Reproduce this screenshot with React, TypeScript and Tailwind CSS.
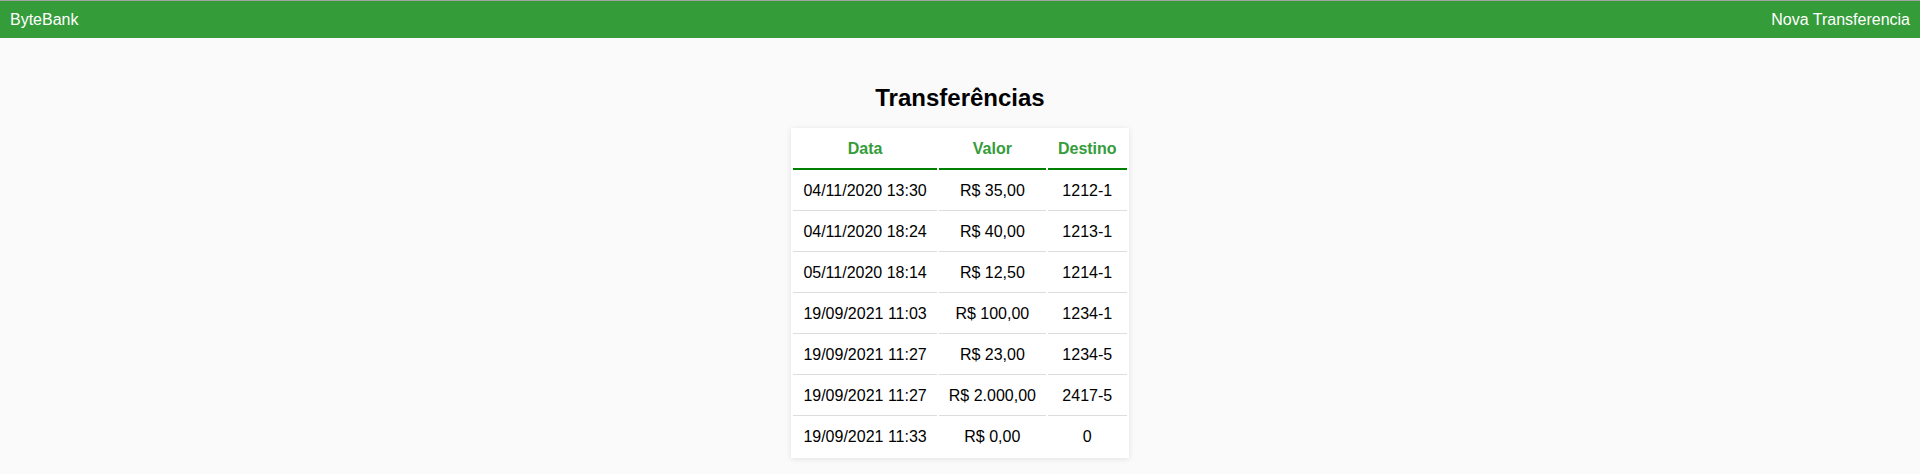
const TRANSFERS = [
  { data: '04/11/2020 13:30', valor: 'R$ 35,00', destino: '1212-1' },
  { data: '04/11/2020 18:24', valor: 'R$ 40,00', destino: '1213-1' },
  { data: '05/11/2020 18:14', valor: 'R$ 12,50', destino: '1214-1' },
  { data: '19/09/2021 11:03', valor: 'R$ 100,00', destino: '1234-1' },
  { data: '19/09/2021 11:27', valor: 'R$ 23,00', destino: '1234-5' },
  { data: '19/09/2021 11:27', valor: 'R$ 2.000,00', destino: '2417-5' },
  { data: '19/09/2021 11:33', valor: 'R$ 0,00', destino: '0' },
]

function Navbar() {
  return (
    <header className="flex h-[38px] items-center justify-between border-t border-[#a3a3a3] bg-[#359c3a] px-[10px] text-[16px] text-white">
      <span>ByteBank</span>
      <span>Nova Transferencia</span>
    </header>
  )
}

export default function App() {
  const th = 'border-b-2 border-[#008000] px-[10px] py-[10px] text-center font-bold leading-[18px] text-[#359c3a]'

  return (
    <div className="min-h-[474px] bg-[#fafafa] font-['Liberation_Sans',Arial,sans-serif]">
      <Navbar />
      <main className="flex flex-col items-center pt-[46px]">
        <h2 className="mb-4 text-[24px] font-bold leading-[28px] text-black">Transferências</h2>
        <div className="bg-white shadow-[0_1px_6px_rgba(0,0,0,0.1)]">
          <table className="border-separate border-spacing-[2px] text-[16px] text-black">
            <thead>
              <tr>
                <th className={th}>Data</th>
                <th className={th}>Valor</th>
                <th className={th}>Destino</th>
              </tr>
            </thead>
            <tbody>
              {TRANSFERS.map((t, i) => {
                const last = i === TRANSFERS.length - 1
                const td = last
                  ? 'px-[10px] py-[10px] text-center leading-[18px]'
                  : 'border-b border-[#dddddd] px-[10px] py-[10px] text-center leading-[18px]'
                return (
                  <tr key={i}>
                    <td className={td}>{t.data}</td>
                    <td className={td}>{t.valor}</td>
                    <td className={td}>{t.destino}</td>
                  </tr>
                )
              })}
            </tbody>
          </table>
        </div>
      </main>
    </div>
  )
}
